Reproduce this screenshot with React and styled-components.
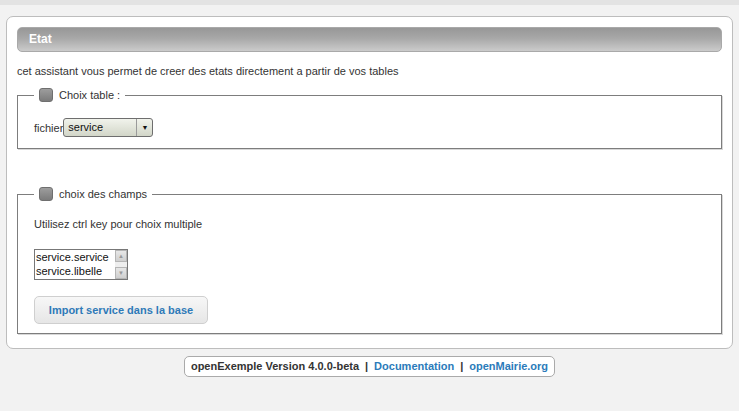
import React from 'react'
import styled, { createGlobalStyle } from 'styled-components'

const GlobalStyle = createGlobalStyle`
  html, body {
    margin: 0;
    padding: 0;
    background: #f2f2f2;
    font-family: "Liberation Sans", Arial, sans-serif;
    font-size: 11px;
    color: #333;
  }
`

const TopBand = styled.div`
  height: 5px;
  background: #e3e3e3;
`

const Page = styled.div`
  padding: 11px 6px 0;
`

const Panel = styled.div`
  background: #fff;
  border: 1px solid #bdbdbd;
  border-radius: 7px;
  padding: 10px 10px 14px;
`

const TitleBar = styled.h1`
  margin: 0;
  height: 23px;
  line-height: 23px;
  padding-left: 11px;
  border: 1px solid #a9a9a9;
  border-radius: 5px;
  background: linear-gradient(to bottom, #979797 0%, #a8a8a8 45%, #cbcbcb 100%);
  color: #fff;
  font-size: 12px;
  font-weight: bold;
`

const Intro = styled.p`
  margin: 12px 0 0;
  line-height: 14px;
`

const Fieldset = styled.fieldset`
  margin: ${p => p.$top}px 0 0;
  padding: 0 16px ${p => p.$bottom}px;
  border: 1px solid #7d7d7d;
  box-shadow: 1px 1px 0 #d8d8d8;
`

const Legend = styled.legend`
  display: flex;
  align-items: center;
  gap: 6px;
  padding: 0 5px;
  height: 14px;
  line-height: 14px;
  color: #333;
`

const Check = styled.span`
  display: inline-block;
  width: 12px;
  height: 12px;
  border: 1px solid #6f6f6f;
  border-radius: 3px;
  background: linear-gradient(to bottom, #9d9d9d, #7b7b7b);
`

const Row = styled.div`
  display: flex;
  align-items: center;
  margin-top: ${p => p.$top}px;
`

const Select = styled.div`
  display: flex;
  width: 88px;
  height: 17px;
  border: 1px solid #6e6e6e;
  border-radius: 3px;
  background: linear-gradient(to bottom, #f1f3ec, #d2d6c8);
`

const SelectValue = styled.span`
  flex: 1;
  padding-left: 4px;
  line-height: 17px;
  color: #111;
`

const SelectArrow = styled.span`
  width: 15px;
  border-left: 1px solid #9a9a9a;
  display: flex;
  align-items: center;
  justify-content: center;
  font-size: 7px;
  color: #111;
`

const Text = styled.p`
  margin: ${p => p.$top}px 0 0;
  line-height: 14px;
`

const ListBox = styled.div`
  display: flex;
  width: 92px;
  height: 29px;
  margin-top: 18px;
  border: 1px solid #777;
  background: #fff;
`

const Options = styled.div`
  flex: 1;
  padding-left: 1px;
  line-height: 14px;
  color: #111;
  overflow: hidden;
  white-space: nowrap;
`

const Scrollbar = styled.div`
  width: 12px;
  display: flex;
  flex-direction: column;
  justify-content: space-between;
  background: #eee;
`

const ScrollButton = styled.span`
  height: 12px;
  border: 1px solid #b5b5b5;
  box-sizing: border-box;
  background: linear-gradient(to bottom, #e7e7e7, #cfcfcf);
  display: flex;
  align-items: center;
  justify-content: center;
  font-size: 6px;
  color: #999;
`

const Button = styled.button`
  display: block;
  margin-top: 16px;
  width: 174px;
  height: 28px;
  border: 1px solid #cfcfcf;
  border-radius: 5px;
  background: linear-gradient(to bottom, #f7f7f7, #e6e6e6);
  color: #2f7ab8;
  font-family: inherit;
  font-size: 11px;
  font-weight: bold;
  cursor: pointer;
`

const Footer = styled.div`
  display: flex;
  justify-content: center;
  margin-top: 7px;
`

const FooterBox = styled.div`
  display: flex;
  gap: 6px;
  padding: 0 6px;
  height: 19px;
  line-height: 19px;
  border: 1px solid #aaa;
  border-radius: 5px;
  background: #fff;
  font-weight: bold;
  color: #333;
`

const FooterLink = styled.a`
  color: #2b7bba;
  text-decoration: none;
`

const App = () => (
  <>
    <GlobalStyle />
    <TopBand />
    <Page>
      <Panel>
        <TitleBar>Etat</TitleBar>
        <Intro>cet assistant vous permet de creer des etats directement a partir de vos tables</Intro>
        <Fieldset $top={10} $bottom={11}>
          <Legend><Check />Choix table :</Legend>
          <Row $top={16}>
            fichier
            <Select>
              <SelectValue>service</SelectValue>
              <SelectArrow>▼</SelectArrow>
            </Select>
          </Row>
        </Fieldset>
        <Fieldset $top={38} $bottom={9}>
          <Legend><Check />choix des champs</Legend>
          <Text $top={16}>Utilisez ctrl key pour choix multiple</Text>
          <ListBox>
            <Options>
              <div>service.service</div>
              <div>service.libelle</div>
            </Options>
            <Scrollbar>
              <ScrollButton>▲</ScrollButton>
              <ScrollButton>▼</ScrollButton>
            </Scrollbar>
          </ListBox>
          <Button>Import service dans la base</Button>
        </Fieldset>
      </Panel>
      <Footer>
        <FooterBox>
          <span>openExemple Version 4.0.0-beta</span>
          <span>|</span>
          <FooterLink href="#">Documentation</FooterLink>
          <span>|</span>
          <FooterLink href="#">openMairie.org</FooterLink>
        </FooterBox>
      </Footer>
    </Page>
  </>
)

export default App
